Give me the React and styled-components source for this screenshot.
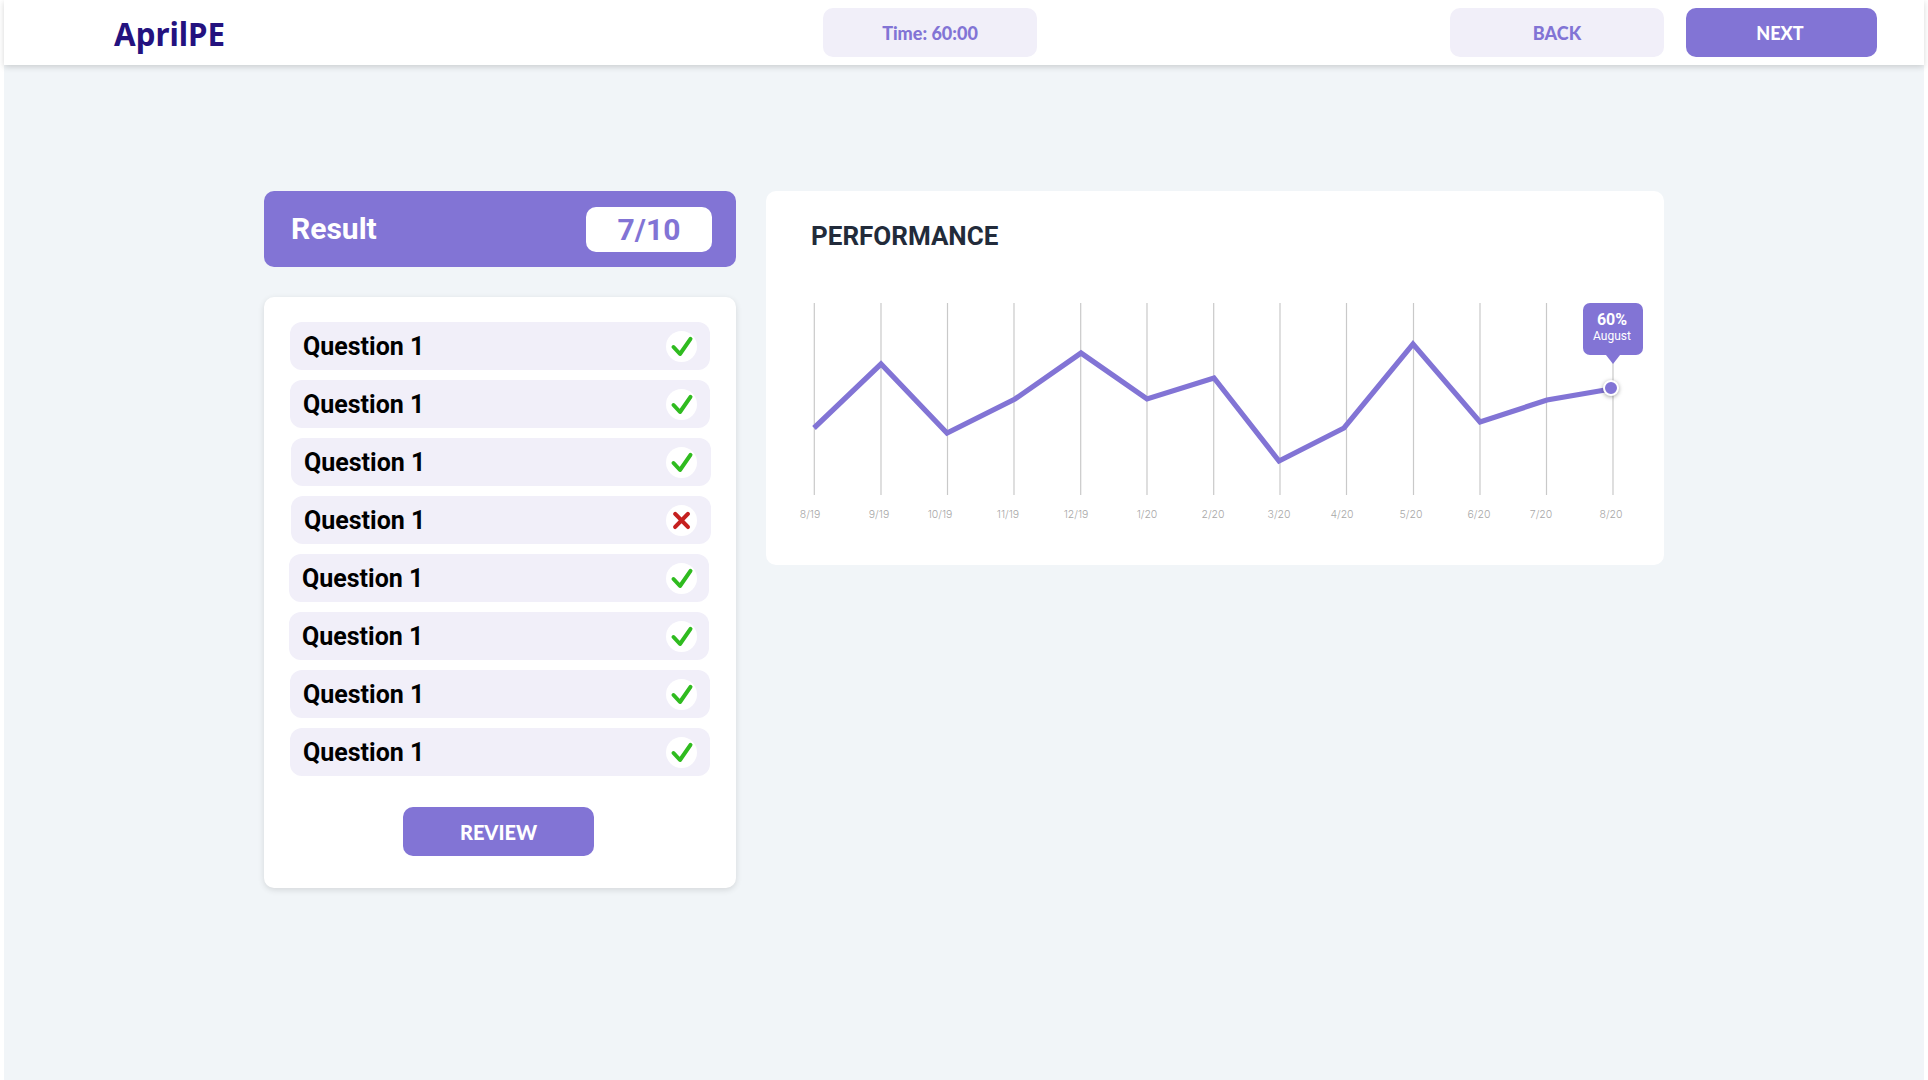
import React from "react";
import styled, { createGlobalStyle } from "styled-components";

const PURPLE = "#8274d5";
const LILAC = "#f1eff9";

const GlobalStyle = createGlobalStyle`
  html, body {
    margin: 0;
    padding: 0;
    background: #fff;
  }
  * {
    box-sizing: border-box;
  }
`;

const Shell = styled.div`
  padding: 0 4px;
  background: #fff;
`;

const Page = styled.div`
  min-height: 1080px;
  background: #f1f5f8;
`;

const TopBar = styled.header`
  display: flex;
  align-items: center;
  height: 65px;
  padding: 0 47px 0 110px;
  background: #fff;
  box-shadow: 0 2px 6px rgba(0, 0, 0, 0.16);
`;

const Logo = styled.div`
  flex: 0 0 709px;
  padding-top: 2px;
  font-family: "Noto Sans", sans-serif;
  font-weight: 700;
  font-size: 31.3px;
  color: #24127f;
`;

const Pill = styled.div`
  display: flex;
  align-items: center;
  justify-content: center;
  width: ${(p) => p.$width}px;
  height: 49px;
  padding-right: ${(p) => p.$inset || 0}px;
  border-radius: 10px;
  border: 0;
  background: ${(p) => (p.$filled ? PURPLE : LILAC)};
  color: ${(p) => (p.$filled ? "#fff" : PURPLE)};
  font-family: "Lato", sans-serif;
  font-weight: 900;
  font-size: ${(p) => p.$size || 18}px;
`;

const Actions = styled.div`
  display: flex;
  gap: 22px;
  margin-left: auto;
`;

const Main = styled.main`
  display: grid;
  grid-template-columns: 472px 898px;
  gap: 30px;
  align-items: start;
  padding: 126px 0 0 260px;
`;

const LeftColumn = styled.section`
  display: flex;
  flex-direction: column;
  gap: 30px;
`;

const ResultBar = styled.div`
  display: flex;
  align-items: center;
  justify-content: space-between;
  height: 76px;
  padding: 0 24px 0 27px;
  border-radius: 10px;
  background: ${PURPLE};
`;

const ResultLabel = styled.div`
  margin-top: -2px;
  font-family: "Roboto", sans-serif;
  font-weight: 700;
  font-size: 30px;
  color: #fff;
`;

const Score = styled.div`
  display: flex;
  align-items: center;
  justify-content: center;
  width: 126px;
  height: 45px;
  border-radius: 10px;
  background: #fff;
  font-family: "Roboto", sans-serif;
  font-weight: 700;
  font-size: 30px;
  color: ${PURPLE};
`;

const ListCard = styled.div`
  display: flex;
  flex-direction: column;
  height: 591px;
  padding: 25px 26px 0;
  border-radius: 10px;
  background: #fff;
  box-shadow: 0 2px 6px rgba(0, 0, 0, 0.12);
`;

const QuestionList = styled.div`
  display: flex;
  flex-direction: column;
  gap: 10px;
`;

const Row = styled.div`
  display: flex;
  align-items: center;
  justify-content: space-between;
  width: 420px;
  height: 48px;
  margin-left: ${(p) => p.$nudge}px;
  padding: 0 ${(p) => 13 + p.$nudge}px 0 13px;
  border-radius: 12px;
  background: ${LILAC};
  font-family: "Roboto", sans-serif;
  font-weight: 700;
  font-size: 25px;
  color: #000;
`;

const Badge = styled.svg`
  display: block;
  width: 31px;
  height: 31px;
`;

const ReviewButton = styled(Pill)`
  width: 191px;
  margin: 31px 0 0 113px;
`;

const ChartCard = styled.section`
  height: 374px;
  padding: 30px 0 0 45px;
  border-radius: 10px;
  background: #fff;
`;

const ChartTitle = styled.h2`
  margin: 0;
  font-family: "Roboto", sans-serif;
  font-weight: 700;
  font-size: 26px;
  line-height: 30px;
  color: #222b3a;
`;

const ChartArea = styled.div`
  position: relative;
  width: 852px;
  height: 250px;
  margin-top: 51px;
`;

const ChartSvg = styled.svg`
  display: block;
  overflow: visible;
`;

const AxisLabel = styled.text`
  font-family: "Inter", sans-serif;
  font-weight: 300;
  font-size: 10.5px;
  fill: #a8a8a8;
  text-anchor: middle;
`;

const Dot = styled.div`
  position: absolute;
  left: 792px;
  top: 78px;
  width: 16px;
  height: 16px;
  border: 2.5px solid #fff;
  border-radius: 50%;
  background: ${PURPLE};
  box-shadow: 0 1px 4px rgba(0, 0, 0, 0.35);
`;

const Tooltip = styled.div`
  position: absolute;
  left: 772px;
  top: 1px;
  display: flex;
  flex-direction: column;
  align-items: center;
  justify-content: center;
  width: 60px;
  height: 52px;
  padding: 0 2px 4px 0;
  border-radius: 7px;
  background: ${PURPLE};
  color: #fff;
  font-family: "Roboto", sans-serif;

  &::after {
    content: "";
    position: absolute;
    left: 23px;
    bottom: -9px;
    border-left: 7px solid transparent;
    border-right: 7px solid transparent;
    border-top: 9px solid ${PURPLE};
  }
`;

const TooltipValue = styled.div`
  font-weight: 700;
  font-size: 16px;
  line-height: 19px;
`;

const TooltipMonth = styled.div`
  font-weight: 400;
  font-size: 12px;
  line-height: 15px;
`;

const ORIGIN_X = 811;
const ORIGIN_Y = 302;

const gridX = [814.3, 881, 947.5, 1014, 1080.7, 1147, 1213.7, 1280, 1346.5, 1413.5, 1480, 1546.5, 1613];

const linePoints = [
  [814, 428],
  [881, 364],
  [947, 433],
  [1015, 399],
  [1081, 353],
  [1147, 399],
  [1214, 378],
  [1279, 461],
  [1344, 428],
  [1413, 344],
  [1480, 422],
  [1547, 400],
  [1611, 389],
];

const axis = [
  ["8/19", 810],
  ["9/19", 879],
  ["10/19", 940],
  ["11/19", 1008],
  ["12/19", 1076],
  ["1/20", 1147],
  ["2/20", 1213],
  ["3/20", 1279],
  ["4/20", 1342],
  ["5/20", 1411],
  ["6/20", 1479],
  ["7/20", 1541],
  ["8/20", 1611],
];

const questions = [
  { nudge: 0, ok: true },
  { nudge: 0, ok: true },
  { nudge: 1, ok: true },
  { nudge: 1, ok: false },
  { nudge: -1, ok: true },
  { nudge: -1, ok: true },
  { nudge: 0, ok: true },
  { nudge: 0, ok: true },
];

function StatusBadge({ ok }) {
  return (
    <Badge viewBox="0 0 31 31">
      <circle cx="15.5" cy="15.5" r="15.5" fill="#fff" />
      {ok ? (
        <path d="M7.5 16L14 23L24.5 7.8" fill="none" stroke="#2fbb1f" strokeWidth="4" strokeLinecap="round" strokeLinejoin="round" />
      ) : (
        <path d="M9.2 8.9L21.9 21.9M21.9 8.9L9.2 21.9" fill="none" stroke="#c5201f" strokeWidth="4.2" strokeLinecap="round" />
      )}
    </Badge>
  );
}

function Chart() {
  return (
    <ChartArea>
      <ChartSvg width="852" height="250" viewBox={`${ORIGIN_X} ${ORIGIN_Y} 852 250`}>
        {gridX.map((x) => (
          <line key={x} x1={x} x2={x} y1="303" y2="495" stroke="#c9c9c9" strokeWidth="1.2" />
        ))}
        <polyline
          points={linePoints.map((p) => p.join(",")).join(" ")}
          fill="none"
          stroke={PURPLE}
          strokeWidth="5.2"
          strokeLinejoin="miter"
        />
        {axis.map(([label, x]) => (
          <AxisLabel key={label} x={x} y="518">
            {label}
          </AxisLabel>
        ))}
      </ChartSvg>
      <Tooltip>
        <TooltipValue>60%</TooltipValue>
        <TooltipMonth>August</TooltipMonth>
      </Tooltip>
      <Dot />
    </ChartArea>
  );
}

export default function App() {
  return (
    <Shell>
      <GlobalStyle />
      <Page>
        <TopBar>
          <Logo>AprilPE</Logo>
          <Pill $width={214}>Time: 60:00</Pill>
          <Actions>
            <Pill $width={214}>BACK</Pill>
            <Pill $width={191} $filled $inset={3}>
              NEXT
            </Pill>
          </Actions>
        </TopBar>
        <Main>
          <LeftColumn>
            <ResultBar>
              <ResultLabel>Result</ResultLabel>
              <Score>7/10</Score>
            </ResultBar>
            <ListCard>
              <QuestionList>
                {questions.map((q, i) => (
                  <Row key={i} $nudge={q.nudge}>
                    Question 1
                    <StatusBadge ok={q.ok} />
                  </Row>
                ))}
              </QuestionList>
              <ReviewButton $filled $size={20}>
                REVIEW
              </ReviewButton>
            </ListCard>
          </LeftColumn>
          <ChartCard>
            <ChartTitle>PERFORMANCE</ChartTitle>
            <Chart />
          </ChartCard>
        </Main>
      </Page>
    </Shell>
  );
}
